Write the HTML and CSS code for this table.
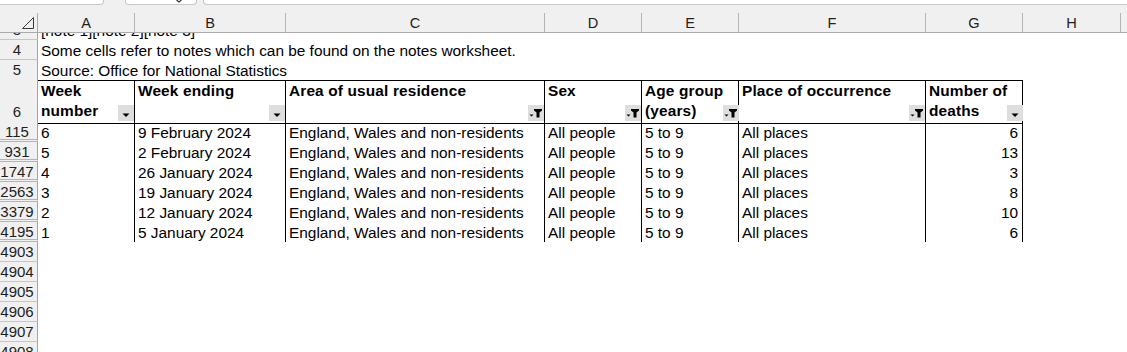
FILE: index.html
```html
<!DOCTYPE html>
<html lang="en">
<head>
<meta charset="utf-8">
<title>Deaths by week</title>
<link rel="stylesheet" href="styles.css">
</head>
<body>
<div class="topbar">
  <div class="box box1"></div>
  <div class="box box2"><svg class="chev" width="6" height="3" viewBox="0 0 6 3"><path d="M0.5 0 L3 2 L5.5 0" fill="none" stroke="#333" stroke-width="1.2"/></svg></div>
  <div class="box box3"></div>
</div>
<div class="grid colhead">
  <div class="corner"><svg width="37" height="19" viewBox="0 0 37 19"><polygon points="22.5,15.5 33.5,15.5 33.5,4.5" fill="none" stroke="#3a3a3a" stroke-width="1"/></svg></div>
  <div class="ch">A</div><div class="ch">B</div><div class="ch">C</div><div class="ch">D</div><div class="ch">E</div><div class="ch">F</div><div class="ch">G</div><div class="ch">H</div><div class="ch last"></div>
</div>
<div class="sheet">
  <div class="grid row row3">
    <div class="rh">3</div><div class="c">[note 1][note 2][note 3]</div>
  </div>
  <div class="grid row">
    <div class="rh">4</div><div class="c">Some cells refer to notes which can be found on the notes worksheet.</div>
  </div>
  <div class="grid row row5">
    <div class="rh">5</div><div class="c t">Source: Office for National Statistics</div><div class="c t"></div><div class="c t"></div><div class="c t"></div><div class="c t"></div><div class="c t"></div><div class="c t"></div>
  </div>
  <div class="grid hrow">
    <div class="rh rh6">6</div>
    <div class="hc"><span class="ht">Week<br>number</span><span class="btn"><svg width="16" height="16" viewBox="0 0 16 16"><polygon points="4.5,8.5 11.5,8.5 8,12" fill="#000"/></svg></span></div>
    <div class="hc"><span class="ht">Week ending</span><span class="btn"><svg width="16" height="16" viewBox="0 0 16 16"><polygon points="4.5,8.5 11.5,8.5 8,12" fill="#000"/></svg></span></div>
    <div class="hc"><span class="ht">Area of usual residence</span><span class="btn"><svg width="16" height="16" viewBox="0 0 16 16"><polygon points="1.5,9.5 5.5,9.5 3.5,11.5" fill="#000"/><polygon points="6,4 14,4 14,5.5 11.5,7.5 11.5,12.5 8.5,12.5 8.5,7.5 6,5.5" fill="#000"/></svg></span></div>
    <div class="hc"><span class="ht">Sex</span><span class="btn"><svg width="16" height="16" viewBox="0 0 16 16"><polygon points="1.5,9.5 5.5,9.5 3.5,11.5" fill="#000"/><polygon points="6,4 14,4 14,5.5 11.5,7.5 11.5,12.5 8.5,12.5 8.5,7.5 6,5.5" fill="#000"/></svg></span></div>
    <div class="hc"><span class="ht">Age group<br>(years)</span><span class="btn"><svg width="16" height="16" viewBox="0 0 16 16"><polygon points="1.5,9.5 5.5,9.5 3.5,11.5" fill="#000"/><polygon points="6,4 14,4 14,5.5 11.5,7.5 11.5,12.5 8.5,12.5 8.5,7.5 6,5.5" fill="#000"/></svg></span></div>
    <div class="hc"><span class="ht">Place of occurrence</span><span class="btn"><svg width="16" height="16" viewBox="0 0 16 16"><polygon points="1.5,9.5 5.5,9.5 3.5,11.5" fill="#000"/><polygon points="6,4 14,4 14,5.5 11.5,7.5 11.5,12.5 8.5,12.5 8.5,7.5 6,5.5" fill="#000"/></svg></span></div>
    <div class="hc"><span class="ht">Number of<br>deaths</span><span class="btn"><svg width="16" height="16" viewBox="0 0 16 16"><polygon points="4.5,8.5 11.5,8.5 8,12" fill="#000"/></svg></span></div>
  </div>
  <div class="grid row drow">
    <div class="rh hid">115</div><div class="c b">6</div><div class="c b">9 February 2024</div><div class="c b">England, Wales and non-residents</div><div class="c b">All people</div><div class="c b">5 to 9</div><div class="c b">All places</div><div class="c b num">6</div>
  </div>
  <div class="grid row drow">
    <div class="rh hid">931</div><div class="c b">5</div><div class="c b">2 February 2024</div><div class="c b">England, Wales and non-residents</div><div class="c b">All people</div><div class="c b">5 to 9</div><div class="c b">All places</div><div class="c b num">13</div>
  </div>
  <div class="grid row drow">
    <div class="rh hid">1747</div><div class="c b">4</div><div class="c b">26 January 2024</div><div class="c b">England, Wales and non-residents</div><div class="c b">All people</div><div class="c b">5 to 9</div><div class="c b">All places</div><div class="c b num">3</div>
  </div>
  <div class="grid row drow">
    <div class="rh hid">2563</div><div class="c b">3</div><div class="c b">19 January 2024</div><div class="c b">England, Wales and non-residents</div><div class="c b">All people</div><div class="c b">5 to 9</div><div class="c b">All places</div><div class="c b num">8</div>
  </div>
  <div class="grid row drow">
    <div class="rh hid">3379</div><div class="c b">2</div><div class="c b">12 January 2024</div><div class="c b">England, Wales and non-residents</div><div class="c b">All people</div><div class="c b">5 to 9</div><div class="c b">All places</div><div class="c b num">10</div>
  </div>
  <div class="grid row drow">
    <div class="rh hid">4195</div><div class="c b">1</div><div class="c b">5 January 2024</div><div class="c b">England, Wales and non-residents</div><div class="c b">All people</div><div class="c b">5 to 9</div><div class="c b">All places</div><div class="c b num">6</div>
  </div>
  <div class="grid row"><div class="rh">4903</div></div>
  <div class="grid row"><div class="rh">4904</div></div>
  <div class="grid row"><div class="rh">4905</div></div>
  <div class="grid row"><div class="rh">4906</div></div>
  <div class="grid row"><div class="rh">4907</div></div>
  <div class="grid row"><div class="rh">4908</div></div>
</div>
</body>
</html>
```
FILE: styles.css
```css
* { box-sizing: border-box; }
html, body { margin: 0; padding: 0; }
body {
  width: 1127px;
  height: 352px;
  overflow: hidden;
  background: #fff;
  font-family: "Liberation Sans", Arial, sans-serif;
  font-size: 15.4px;
  color: #000;
}
.topbar {
  height: 13px;
  background: #f0f0f0;
  display: flex;
  align-items: flex-start;
}
.box {
  height: 5px;
  background: #fff;
  border: 1px solid #c8c8c8;
  border-top: 0;
  border-radius: 0 0 4px 4px;
}
.box1 { width: 104px; border-left: 0; border-radius: 0 0 4px 0; }
.box2 {
  width: 72px;
  margin-left: 21px;
  display: flex;
  justify-content: flex-end;
  align-items: flex-start;
  padding-right: 14px;
}
.chev { display: block; }
.box3 { flex: 1; margin-left: 6px; border-right: 0; border-radius: 0 0 0 4px; }

.grid {
  display: grid;
  grid-template-columns: 38px 97px 151px 259px 97px 97px 187px 97px 98px 1fr;
}
.colhead {
  height: 20px;
  background: #f0f0f0;
  border-bottom: 1px solid #ababab;
}
.corner { border-right: 1px solid #ababab; }
.corner svg { display: block; }
.ch {
  border-right: 1px solid #b4b4b4;
  text-align: center;
  font-size: 14.6px;
  line-height: 18px;
  padding-top: 1px;
  color: #222;
}
.ch.last { border-right: 0; }

.sheet {
  height: 319px;
  overflow: hidden;
}
.row { height: 20px; }
.row3 { margin-top: -13px; }
.rh {
  background: #f0f0f0;
  border-right: 1px solid #a6a6a6;
  border-bottom: 1px solid #c6c6c6;
  text-align: center;
  padding-right: 3px;
  font-size: 15px;
  line-height: 19px;
  color: #1e1e1e;
  overflow: hidden;
  white-space: nowrap;
}
.rh.hid { border-bottom: 3px double #b4b4b4; line-height: 17px; padding-top: 1px; }
.c {
  padding: 1px 4px 0 3px;
  line-height: 19px;
  white-space: nowrap;
}
.c.t { border-bottom: 1px solid #000; }
.c.b { border-right: 1px solid #000; }
.c.num { text-align: right; }

.hrow { height: 42px; }
.rh6 {
  display: flex;
  align-items: flex-end;
  justify-content: center;
  line-height: 20px;
  padding-bottom: 1px;
}
.hc {
  border-right: 1px solid #000;
  border-bottom: 1px solid #000;
  padding: 1px 0 2px 3px;
  display: flex;
  justify-content: space-between;
  align-items: flex-start;
  font-weight: bold;
  line-height: 20px;
  letter-spacing: 0.15px;
  white-space: nowrap;
}
.ht { display: block; }
.btn {
  align-self: flex-end;
  width: 16px;
  height: 16px;
  background: #dedede;
  flex: none;
}
.btn svg { display: block; }
```
